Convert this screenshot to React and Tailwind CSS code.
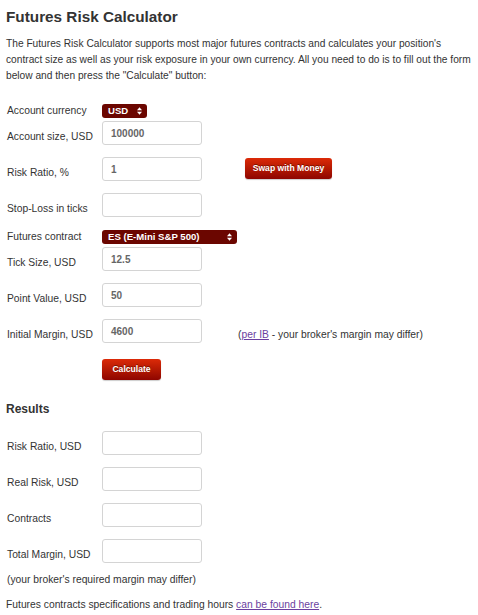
import React from 'react';

const font = { fontFamily: '"Liberation Sans", Arial, Helvetica, sans-serif' };

const Arrows = () => (
  <svg width="5" height="8" viewBox="0 0 6 9" className="shrink-0">
    <path d="M3 0 L6 3.5 L0 3.5 Z" fill="#ffffff" />
    <path d="M3 9 L6 5.5 L0 5.5 Z" fill="#ffffff" />
  </svg>
);

const Select = ({ value, width }) => (
  <div
    className={`flex items-center justify-between h-[14px] rounded-[3px] bg-[#6b0600] pl-[6px] pr-[5px] text-white text-[9.6px] font-bold leading-none ${width}`}
  >
    <span>{value}</span>
    <Arrows />
  </div>
);

const Field = ({ value }) => (
  <div className="w-[100px] h-[24px] shrink-0 rounded-[3px] border border-[#d4d4d4] bg-white flex items-center px-[8px] text-[10px] font-bold text-[#666]">
    {value}
  </div>
);

const RedButton = ({ children, width }) => (
  <button className={`block h-[21px] ${width} rounded-[3px] bg-gradient-to-b from-[#dc2a08] to-[#8e0500] text-white text-[8.6px] font-bold leading-none [text-shadow:0_-1px_0_rgba(0,0,0,0.4)] shadow-[0_1px_1px_rgba(0,0,0,0.2)]`}>
    {children}
  </button>
);

const Row = ({ label, children, className = '' }) => (
  <div className={`flex items-end h-[24px] ${className}`}>
    <span className="w-[95px] shrink-0 text-[10.3px] leading-[16px] text-[#333]">{label}</span>
    {children}
  </div>
);

export default function App() {
  return (
    <div className="bg-white w-[478px] h-[615px] overflow-hidden pl-[6px] pr-[2px] text-[#333]" style={font}>
      <h1 className="pt-[6px] text-[15.3px] leading-[22px] font-bold text-[#333]">Futures Risk Calculator</h1>
      <p className="mt-[8px] text-[10.2px] leading-[16px] text-[#333]">
        The Futures Risk Calculator supports most major futures contracts and calculates your position's contract
        size as well as your risk exposure in your own currency. All you need to do is to fill out the form below and
        then press the "Calculate" button:
      </p>

      <div className="mt-[19px] pl-[1px]">
        <div className="flex items-center h-[15px]">
          <span className="w-[95px] text-[10.3px] leading-[15px] text-[#333]">Account currency</span>
          <Select value="USD" width="w-[45px]" />
        </div>
        <Row label="Account size, USD" className="mt-[3px]">
          <Field value="100000" />
        </Row>
        <Row label="Risk Ratio, %" className="mt-[12px]">
          <Field value="1" />
          <div className="ml-[43px] self-start mt-[1px] flex">
            <RedButton width="w-[87px]">Swap with Money</RedButton>
          </div>
        </Row>
        <Row label="Stop-Loss in ticks" className="mt-[12px]">
          <Field value="" />
        </Row>
        <div className="flex items-center h-[15px] mt-[12px]">
          <span className="w-[95px] text-[10.3px] leading-[15px] text-[#333]">Futures contract</span>
          <Select value="ES (E-Mini S&P 500)" width="w-[135px]" />
        </div>
        <Row label="Tick Size, USD" className="mt-[3px]">
          <Field value="12.5" />
        </Row>
        <Row label="Point Value, USD" className="mt-[12px]">
          <Field value="50" />
        </Row>
        <Row label="Initial Margin, USD" className="mt-[12px]">
          <Field value="4600" />
          <span className="ml-[36px] text-[10.3px] leading-[16px] text-[#333]">
            (<a href="#" className="underline text-[#6b3fa0]">per IB</a> - your broker's margin may differ)
          </span>
        </Row>
        <div className="mt-[16px] pl-[95px] flex">
          <RedButton width="w-[59px]">Calculate</RedButton>
        </div>
      </div>

      <h2 className="mt-[21px] text-[12px] leading-[16px] font-bold text-[#333]">Results</h2>

      <div className="mt-[14px] pl-[1px]">
        <Row label="Risk Ratio, USD">
          <Field value="" />
        </Row>
        <Row label="Real Risk, USD" className="mt-[12px]">
          <Field value="" />
        </Row>
        <Row label="Contracts" className="mt-[12px]">
          <Field value="" />
        </Row>
        <Row label="Total Margin, USD" className="mt-[12px]">
          <Field value="" />
        </Row>
        <p className="mt-[9px] text-[10.3px] leading-[16px] text-[#333]">(your broker's required margin may differ)</p>
      </div>
      <p className="mt-[9px] text-[10.3px] leading-[16px] text-[#333]">
        Futures contracts specifications and trading hours{' '}
        <a href="#" className="underline text-[#6b3fa0]">can be found here</a>.
      </p>
    </div>
  );
}
